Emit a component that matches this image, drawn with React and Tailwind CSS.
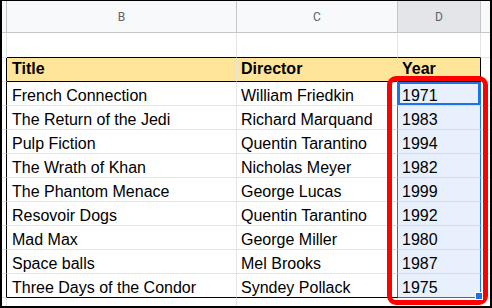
import React from "react";

const movies = [
  ["French Connection", "William Friedkin", "1971"],
  ["The Return of the Jedi", "Richard Marquand", "1983"],
  ["Pulp Fiction", "Quentin Tarantino", "1994"],
  ["The Wrath of Khan", "Nicholas Meyer", "1982"],
  ["The Phantom Menace", "George Lucas", "1999"],
  ["Resovoir Dogs", "Quentin Tarantino", "1992"],
  ["Mad Max", "George Miller", "1980"],
  ["Space balls", "Mel Brooks", "1987"],
  ["Three Days of the Condor", "Syndey Pollack", "1975"],
];

const App = () => {
  return (
    <div className="relative w-[492px] h-[308px] overflow-hidden bg-white border-black border-t border-l-2 border-r-2 border-b-2 font-['Liberation_Sans',Arial,sans-serif] text-[16px] text-black">
      {/* column letters */}
      <div className="flex h-[32px] border-b border-[#c4c7c5] bg-[#f8f9fa] font-['Roboto',Arial,sans-serif] text-[12px] text-[#5f6368]">
        <div className="w-[5px] border-r border-[#c4c7c5]" />
        <div className="w-[230px] flex items-center justify-center border-r border-[#c4c7c5]">B</div>
        <div className="w-[161px] flex items-center justify-center border-r border-[#c4c7c5]">C</div>
        <div className="w-[83px] flex items-center justify-center border-r border-[#c4c7c5] bg-[#e3e5e8]">D</div>
        <div className="flex-1" />
      </div>

      {/* empty row */}
      <div className="flex h-[25px]">
        <div className="w-[5px] border-r border-b border-[#e2e3e3]" />
        <div className="w-[230px] border-r border-b border-r-[#e2e3e3] border-b-black" />
        <div className="w-[161px] border-r border-b border-r-[#e2e3e3] border-b-black" />
        <div className="w-[83px] border-r border-b border-r-[#e2e3e3] border-b-black" />
        <div className="flex-1 border-b border-[#e2e3e3]" />
      </div>

      {/* table header */}
      <div className="flex h-[24px] font-bold">
        <div className="w-[5px] border-r border-b border-r-black border-b-[#e2e3e3]" />
        <div className="w-[230px] flex items-end px-[5px] pb-[3px] leading-[18px] bg-[#ffe599] border-r border-b border-r-[#e2e3e3] border-b-black">Title</div>
        <div className="w-[161px] flex items-end px-[4px] pb-[3px] leading-[18px] bg-[#ffe599] border-r border-b border-r-[#e2e3e3] border-b-black">Director</div>
        <div className="w-[83px] flex items-end px-[4px] pb-[3px] leading-[18px] bg-[#ffe599] border-r border-b border-black">Year</div>
        <div className="flex-1 border-b border-[#e2e3e3]" />
      </div>

      {movies.map((m, i) => {
        const last = i === movies.length - 1;
        return (
          <div key={i} className="flex h-[24px] leading-[18px]">
            <div className="w-[5px] border-r border-b border-r-black border-b-[#e2e3e3]" />
            <div className={`w-[230px] flex items-end px-[5px] whitespace-nowrap border-r border-b border-r-[#e2e3e3] ${last ? "border-b-black" : "border-b-[#e2e3e3]"}`}>
              {m[0]}
            </div>
            <div className={`w-[161px] flex items-end px-[4px] whitespace-nowrap border-r border-b border-r-[#1a73e8] ${last ? "border-b-black" : "border-b-[#e2e3e3]"}`}>
              {m[1]}
            </div>
            <div
              className={`relative w-[83px] flex items-end px-[4px] bg-[#e8f0fe] border-r border-b border-r-[#1a73e8] ${last ? "border-b-[#1a73e8]" : "border-b-[#d3dbe7]"} ${i === 0 ? "shadow-[inset_0_0_0_2px_#1a73e8]" : ""}`}
            >
              {m[2]}
              {last && (
                <div className="absolute z-10 right-[-3px] bottom-[-3px] w-[8px] h-[8px] bg-[#1a73e8] border border-white" />
              )}
            </div>
            <div className="flex-1 border-b border-[#e2e3e3]" />
          </div>
        );
      })}

      {/* trailing row */}
      <div className="flex h-[8px]">
        <div className="w-[5px] border-r border-[#e2e3e3]" />
        <div className="w-[230px] border-r border-[#e2e3e3]" />
        <div className="w-[161px] border-r border-[#e2e3e3]" />
        <div className="w-[83px] border-r border-[#e2e3e3]" />
        <div className="flex-1" />
      </div>

      {/* red highlight */}
      <div className="absolute left-[385px] top-[75px] w-[101px] h-[229px] border-[5px] border-[#ff0000] rounded-[9px]" />
    </div>
  );
};

export default App;
